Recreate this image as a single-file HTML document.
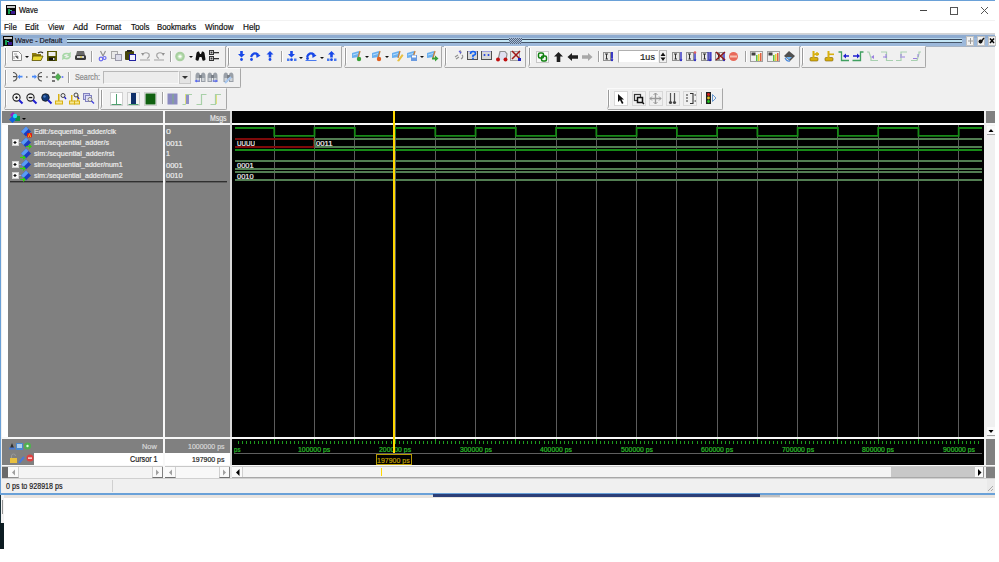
<!DOCTYPE html><html><head><meta charset="utf-8"><style>
html,body{margin:0;padding:0;width:999px;height:562px;overflow:hidden;background:#fff;position:relative}
div{position:absolute;box-sizing:border-box}
.t{font-family:"Liberation Sans",sans-serif;white-space:nowrap;line-height:1;transform-origin:0 0;-webkit-text-stroke:0.2px currentColor}
svg{position:absolute;left:0;top:0}
</style></head><body>
<div style="left:0px;top:0px;width:995px;height:495px;background:#f0f0f0;"></div>
<div style="left:1px;top:1px;width:994px;height:19px;background:#ffffff;"></div>
<div style="left:1px;top:20px;width:994px;height:1px;background:#f2f2f2;"></div>
<div style="left:1px;top:21px;width:994px;height:12px;background:#ffffff;"></div>
<div style="left:1px;top:33px;width:994px;height:1px;background:#d4d4d4;"></div>
<div style="left:0px;top:0px;width:995px;height:1px;background:#6aa1d8;"></div>
<div style="left:0px;top:0px;width:1px;height:495px;background:#6aa1d8;"></div>
<div style="left:6px;top:5px;width:10px;height:10px;background:#0a0a0a;"></div>
<div style="left:7px;top:6px;width:8px;height:2px;background:#c8c8c8;"></div>
<div style="left:8px;top:9px;width:2px;height:5px;background:#18a050;"></div>
<div style="left:10px;top:10px;width:2px;height:1px;background:#30c0a0;"></div>
<div style="left:11px;top:11px;width:4px;height:3px;background:#3a1a90;"></div>
<div class="t" style="left:18.56px;top:6.00px;font-size:8.72px;color:#111;transform:scaleX(0.8635);">Wave</div>
<div style="left:920px;top:10px;width:7px;height:1px;background:#444;"></div>
<div style="left:950px;top:7px;width:8px;height:8px;border:1px solid #555"></div>
<div class="t" style="left:4.46px;top:23.00px;font-size:8.72px;color:#111;transform:scaleX(0.9112);">File</div>
<div class="t" style="left:25.17px;top:23.00px;font-size:8.72px;color:#111;transform:scaleX(0.9047);">Edit</div>
<div class="t" style="left:47.96px;top:23.00px;font-size:8.72px;color:#111;transform:scaleX(0.8553);">View</div>
<div class="t" style="left:73.20px;top:23.00px;font-size:8.72px;color:#111;transform:scaleX(0.9628);">Add</div>
<div class="t" style="left:96.17px;top:23.00px;font-size:8.72px;color:#111;transform:scaleX(0.9084);">Format</div>
<div class="t" style="left:130.74px;top:23.00px;font-size:8.72px;color:#111;transform:scaleX(0.9002);">Tools</div>
<div class="t" style="left:157.27px;top:23.00px;font-size:8.72px;color:#111;transform:scaleX(0.8967);">Bookmarks</div>
<div class="t" style="left:205.46px;top:23.00px;font-size:8.72px;color:#111;transform:scaleX(0.9193);">Window</div>
<div class="t" style="left:242.64px;top:23.00px;font-size:8.72px;color:#111;transform:scaleX(0.9422);">Help</div>
<div style="left:1px;top:34px;width:994px;height:13px;background:#9cb8da;"></div>
<div style="left:1px;top:34px;width:994px;height:1px;background:#c8d0dc;"></div>
<div style="left:1px;top:35px;width:994px;height:3px;background:#8eabd0;"></div>
<div style="left:1px;top:46px;width:994px;height:1px;background:#a8b4c4;"></div>
<div style="left:3px;top:36px;width:10px;height:10px;background:#0a0a0a;"></div>
<div style="left:4px;top:37px;width:8px;height:2px;background:#c8c8c8;"></div>
<div style="left:5px;top:40px;width:2px;height:5px;background:#18a050;"></div>
<div style="left:7px;top:41px;width:2px;height:1px;background:#30c0a0;"></div>
<div style="left:8px;top:42px;width:4px;height:3px;background:#3a1a90;"></div>
<div class="t" style="left:15.06px;top:37.00px;font-size:7.85px;color:#1a1a2a;transform:scaleX(0.9180);">Wave - Default</div>
<div style="left:67px;top:38px;width:442px;height:1px;background:#b4d4ea;"></div>
<div style="left:67px;top:39px;width:442px;height:1px;background:#38465a;"></div>
<div style="left:67px;top:40px;width:442px;height:2px;background:#c4e6f6;"></div>
<div style="left:67px;top:42px;width:442px;height:1px;background:#46566a;"></div>
<div style="left:522px;top:38px;width:440px;height:1px;background:#b4d4ea;"></div>
<div style="left:522px;top:39px;width:440px;height:1px;background:#38465a;"></div>
<div style="left:522px;top:40px;width:440px;height:2px;background:#c4e6f6;"></div>
<div style="left:522px;top:42px;width:440px;height:1px;background:#46566a;"></div>
<div style="left:509px;top:37px;width:13px;height:7px;background:#a6bddb;"></div>
<div style="left:966px;top:36px;width:8px;height:10px;background:#f2f2f2;border:1px solid #c0c0c0"></div>
<div style="left:977px;top:36px;width:8px;height:10px;background:#f2f2f2;border:1px solid #c0c0c0"></div>
<div style="left:988px;top:36px;width:8px;height:10px;background:#f2f2f2;border:1px solid #c0c0c0"></div>
<div style="left:4px;top:46px;width:222px;height:22px;border-right:1px solid #a8a8a8;border-bottom:1px solid #a8a8a8;border-top:1px solid #fafafa;border-left:1px solid #fafafa;border-radius:0 0 2px 0"></div>
<div style="left:227px;top:46px;width:115px;height:22px;border-right:1px solid #a8a8a8;border-bottom:1px solid #a8a8a8;border-top:1px solid #fafafa;border-left:1px solid #fafafa;border-radius:0 0 2px 0"></div>
<div style="left:344px;top:46px;width:98px;height:22px;border-right:1px solid #a8a8a8;border-bottom:1px solid #a8a8a8;border-top:1px solid #fafafa;border-left:1px solid #fafafa;border-radius:0 0 2px 0"></div>
<div style="left:444px;top:46px;width:82px;height:22px;border-right:1px solid #a8a8a8;border-bottom:1px solid #a8a8a8;border-top:1px solid #fafafa;border-left:1px solid #fafafa;border-radius:0 0 2px 0"></div>
<div style="left:528px;top:46px;width:272px;height:22px;border-right:1px solid #a8a8a8;border-bottom:1px solid #a8a8a8;border-top:1px solid #fafafa;border-left:1px solid #fafafa;border-radius:0 0 2px 0"></div>
<div style="left:801px;top:46px;width:125px;height:22px;border-right:1px solid #a8a8a8;border-bottom:1px solid #a8a8a8;border-top:1px solid #fafafa;border-left:1px solid #fafafa;border-radius:0 0 2px 0"></div>
<div style="left:4px;top:68px;width:237px;height:20px;border-right:1px solid #a8a8a8;border-bottom:1px solid #a8a8a8;border-top:1px solid #fafafa;border-left:1px solid #fafafa;border-radius:0 0 2px 0"></div>
<div style="left:4px;top:88px;width:95px;height:22px;border-right:1px solid #a8a8a8;border-bottom:1px solid #a8a8a8;border-top:1px solid #fafafa;border-left:1px solid #fafafa;border-radius:0 0 2px 0"></div>
<div style="left:100px;top:88px;width:127px;height:22px;border-right:1px solid #a8a8a8;border-bottom:1px solid #a8a8a8;border-top:1px solid #fafafa;border-left:1px solid #fafafa;border-radius:0 0 2px 0"></div>
<div style="left:607px;top:88px;width:116px;height:22px;border-right:1px solid #a8a8a8;border-bottom:1px solid #a8a8a8;border-top:1px solid #fafafa;border-left:1px solid #fafafa;border-radius:0 0 2px 0"></div>
<div style="left:91px;top:51px;width:1px;height:11px;background:#a0a0a0;"></div>
<div style="left:92px;top:51px;width:1px;height:11px;background:#ffffff;"></div>
<div style="left:170px;top:51px;width:1px;height:11px;background:#a0a0a0;"></div>
<div style="left:171px;top:51px;width:1px;height:11px;background:#ffffff;"></div>
<div style="left:281px;top:51px;width:1px;height:11px;background:#a0a0a0;"></div>
<div style="left:282px;top:51px;width:1px;height:11px;background:#ffffff;"></div>
<div style="left:598px;top:51px;width:1px;height:11px;background:#a0a0a0;"></div>
<div style="left:599px;top:51px;width:1px;height:11px;background:#ffffff;"></div>
<div style="left:745px;top:51px;width:1px;height:11px;background:#a0a0a0;"></div>
<div style="left:746px;top:51px;width:1px;height:11px;background:#ffffff;"></div>
<div style="left:68px;top:72px;width:1px;height:11px;background:#a0a0a0;"></div>
<div style="left:69px;top:72px;width:1px;height:11px;background:#ffffff;"></div>
<div style="left:162px;top:92px;width:1px;height:12px;background:#a0a0a0;"></div>
<div style="left:163px;top:92px;width:1px;height:12px;background:#ffffff;"></div>
<div style="left:701px;top:92px;width:1px;height:12px;background:#a0a0a0;"></div>
<div style="left:702px;top:92px;width:1px;height:12px;background:#ffffff;"></div>
<div class="t" style="left:74.97px;top:73.00px;font-size:8.72px;color:#8a8a8a;transform:scaleX(0.8314);">Search:</div>
<div style="left:103px;top:71px;width:76px;height:13px;background:#ececec;border-top:1px solid #b8b8b8;border-left:1px solid #b8b8b8;border-bottom:1px solid #f8f8f8;border-right:1px solid #f8f8f8"></div>
<div style="left:179px;top:71px;width:12px;height:13px;background:#e4e4e4;border:1px solid #c8c8c8"></div>
<div style="left:618px;top:50px;width:40px;height:13px;background:#ffffff;border-top:1px solid #b0b0b0;border-left:1px solid #b0b0b0;border-bottom:1px solid #f0f0f0"></div>
<div class="t" style="left:640px;top:54px;font-family:Liberation Mono,monospace;font-size:9px;color:#222;letter-spacing:-0.4px">1us</div>
<div style="left:659px;top:50px;width:8px;height:13px;background:#f0f0f0;border:1px solid #b8b8b8"></div>
<div style="left:1px;top:110px;width:994px;height:1px;background:#f4f4f4;"></div>
<div style="left:2px;top:111px;width:161px;height:12px;background:#808080;"></div>
<div style="left:165px;top:111px;width:65px;height:12px;background:#808080;"></div>
<div style="left:232px;top:111px;width:752px;height:12px;background:#000;"></div>
<div style="left:986px;top:111px;width:9px;height:12px;background:#808080;"></div>
<div style="left:2px;top:123px;width:993px;height:2px;background:#f8f8f8;"></div>
<div style="left:163px;top:111px;width:2px;height:327px;background:#f8f8f8;"></div>
<div style="left:230px;top:111px;width:2px;height:327px;background:#d8d8d8;"></div>
<div style="left:984px;top:111px;width:2px;height:327px;background:#f0f0f0;"></div>
<div style="left:2px;top:125px;width:6px;height:312px;background:#ffffff;"></div>
<div style="left:8px;top:125px;width:155px;height:312px;background:#808080;"></div>
<div style="left:165px;top:125px;width:65px;height:312px;background:#808080;"></div>
<div style="left:232px;top:125px;width:752px;height:312px;background:#000;"></div>
<div class="t" style="left:210.24px;top:114.00px;font-size:8.72px;color:#e8e8e8;transform:scaleX(0.7964);">Msgs</div>
<div style="left:986px;top:125px;width:9px;height:312px;background:#f0f0f0;"></div>
<div style="left:987px;top:126px;width:8px;height:9px;background:#fafafa;border-bottom:1px solid #a0a0a0"></div>
<div style="left:987px;top:427px;width:8px;height:9px;background:#fafafa;border-bottom:1px solid #a0a0a0"></div>
<div class="t" style="left:33.93px;top:128.00px;font-size:7.27px;color:#ececec;transform:scaleX(0.9863);">Edit:/sequential_adder/clk</div>
<div class="t" style="left:34.09px;top:139.00px;font-size:7.27px;color:#ececec;transform:scaleX(0.9768);">sim:/sequential_adder/s</div>
<div class="t" style="left:34.08px;top:150.00px;font-size:7.27px;color:#ececec;transform:scaleX(0.9874);">sim:/sequential_adder/rst</div>
<div class="t" style="left:34.09px;top:161.00px;font-size:7.27px;color:#ececec;transform:scaleX(0.9710);">sim:/sequential_adder/num1</div>
<div class="t" style="left:34.09px;top:172.00px;font-size:7.27px;color:#ececec;transform:scaleX(0.9714);">sim:/sequential_adder/num2</div>
<div class="t" style="left:165.55px;top:128.00px;font-size:7.56px;color:#ececec;transform:scaleX(1.1577);">0</div>
<div class="t" style="left:165.59px;top:140.00px;font-size:7.56px;color:#ececec;transform:scaleX(1.0251);">0011</div>
<div class="t" style="left:166.47px;top:150.00px;font-size:7.56px;color:#ececec;transform:scaleX(0.9429);">1</div>
<div class="t" style="left:165.60px;top:162.00px;font-size:7.56px;color:#ececec;transform:scaleX(0.9892);">0001</div>
<div class="t" style="left:165.60px;top:172.00px;font-size:7.56px;color:#ececec;transform:scaleX(0.9846);">0010</div>
<div style="left:10px;top:181px;width:153px;height:1px;background:#303030;"></div>
<div style="left:10px;top:182px;width:153px;height:1px;background:#606060;"></div>
<div style="left:166px;top:181px;width:61px;height:1px;background:#303030;"></div>
<div style="left:166px;top:182px;width:61px;height:1px;background:#606060;"></div>
<div style="left:12px;top:139px;width:7px;height:7px;background:#f8f8f8;border:1px solid #d0d0d0"></div>
<div style="left:19px;top:142px;width:3px;height:1px;background:#b0b0b0;"></div>
<div style="left:12px;top:161px;width:7px;height:7px;background:#f8f8f8;border:1px solid #d0d0d0"></div>
<div style="left:19px;top:164px;width:3px;height:1px;background:#b0b0b0;"></div>
<div style="left:12px;top:172px;width:7px;height:7px;background:#f8f8f8;border:1px solid #d0d0d0"></div>
<div style="left:19px;top:175px;width:3px;height:1px;background:#b0b0b0;"></div>
<div class="t" style="left:236.53px;top:140.00px;font-size:7.27px;color:#f0f0f0;transform:scaleX(0.8553);">UUUU</div>
<div class="t" style="left:315.69px;top:140.00px;font-size:7.27px;color:#f0f0f0;transform:scaleX(1.0662);">0011</div>
<div class="t" style="left:236.70px;top:162.00px;font-size:7.27px;color:#f0f0f0;transform:scaleX(1.0288);">0001</div>
<div class="t" style="left:236.70px;top:173.00px;font-size:7.27px;color:#f0f0f0;transform:scaleX(1.0240);">0010</div>
<div style="left:2px;top:437px;width:993px;height:2px;background:#f8f8f8;"></div>
<div style="left:2px;top:439px;width:161px;height:14px;background:#808080;"></div>
<div style="left:165px;top:439px;width:65px;height:14px;background:#808080;"></div>
<div style="left:34px;top:453px;width:129px;height:12px;background:#ffffff;"></div>
<div style="left:2px;top:453px;width:32px;height:12px;background:#808080;"></div>
<div style="left:165px;top:453px;width:65px;height:12px;background:#ffffff;"></div>
<div style="left:163px;top:439px;width:2px;height:26px;background:#f8f8f8;"></div>
<div style="left:230px;top:439px;width:2px;height:26px;background:#d8d8d8;"></div>
<div style="left:232px;top:439px;width:752px;height:26px;background:#000;"></div>
<div style="left:984px;top:439px;width:2px;height:26px;background:#f0f0f0;"></div>
<div style="left:986px;top:439px;width:9px;height:26px;background:#808080;"></div>
<div class="t" style="left:142.21px;top:443.00px;font-size:7.56px;color:#d8d8d8;transform:scaleX(0.9829);">Now</div>
<div class="t" style="left:187.68px;top:443.00px;font-size:7.56px;color:#d8d8d8;transform:scaleX(0.9260);">1000000 ps</div>
<div class="t" style="left:129.54px;top:456.00px;font-size:8.14px;color:#222;transform:scaleX(0.8869);">Cursor 1</div>
<div class="t" style="left:191.78px;top:456.00px;font-size:7.56px;color:#222;transform:scaleX(0.9198);">197900 ps</div>
<div class="t" style="left:298.26px;top:446.00px;font-size:7.27px;color:#2cc02c;transform:scaleX(0.9505);">100000 ps</div>
<div class="t" style="left:378.95px;top:446.00px;font-size:7.27px;color:#2cc02c;transform:scaleX(0.9453);">200000 ps</div>
<div class="t" style="left:459.55px;top:446.00px;font-size:7.27px;color:#2cc02c;transform:scaleX(0.9433);">300000 ps</div>
<div class="t" style="left:540.21px;top:446.00px;font-size:7.27px;color:#2cc02c;transform:scaleX(0.9392);">400000 ps</div>
<div class="t" style="left:620.59px;top:446.00px;font-size:7.27px;color:#2cc02c;transform:scaleX(0.9433);">500000 ps</div>
<div class="t" style="left:701.05px;top:446.00px;font-size:7.27px;color:#2cc02c;transform:scaleX(0.9453);">600000 ps</div>
<div class="t" style="left:781.57px;top:446.00px;font-size:7.27px;color:#2cc02c;transform:scaleX(0.9453);">700000 ps</div>
<div class="t" style="left:862.13px;top:446.00px;font-size:7.27px;color:#2cc02c;transform:scaleX(0.9443);">800000 ps</div>
<div class="t" style="left:942.66px;top:446.00px;font-size:7.27px;color:#2cc02c;transform:scaleX(0.9443);">900000 ps</div>
<div class="t" style="left:233.81px;top:447.00px;font-size:6.55px;color:#2cc02c;transform:scaleX(0.9271);">ps</div>
<div style="left:376px;top:454px;width:36px;height:11px;background:#000;border:1px solid #b89a00"></div>
<div class="t" style="left:377.47px;top:457.00px;font-size:7.85px;color:#c0a000;transform:scaleX(0.8941);">197900 ps</div>
<div style="left:2px;top:465px;width:993px;height:1px;background:#f8f8f8;"></div>
<div style="left:2px;top:466px;width:993px;height:1px;background:#c8c8c8;"></div>
<div style="left:2px;top:467px;width:6px;height:11px;background:#6a6a6a;"></div>
<div style="left:8px;top:467px;width:155px;height:11px;background:#f4f4f4;"></div>
<div style="left:8px;top:467px;width:11px;height:11px;background:#fafafa;border-right:1px solid #d0d0d0;border-bottom:1px solid #909090"></div>
<div style="left:152px;top:467px;width:11px;height:11px;background:#fafafa;border-left:1px solid #d0d0d0;border-right:1px solid #808080;border-bottom:1px solid #707070"></div>
<div style="left:163px;top:465px;width:2px;height:13px;background:#f8f8f8;"></div>
<div style="left:165px;top:467px;width:65px;height:11px;background:#f0f0f0;"></div>
<div style="left:176px;top:467px;width:43px;height:11px;background:#f8f8f8;"></div>
<div style="left:165px;top:467px;width:11px;height:11px;background:#fafafa;border-right:1px solid #d0d0d0;border-bottom:1px solid #707070"></div>
<div style="left:219px;top:467px;width:11px;height:11px;background:#fafafa;border-left:1px solid #d0d0d0;border-right:1px solid #808080;border-bottom:1px solid #707070"></div>
<div style="left:230px;top:465px;width:2px;height:13px;background:#e8e8e8;"></div>
<div style="left:232px;top:467px;width:752px;height:11px;background:#f4f4f4;"></div>
<div style="left:232px;top:467px;width:11px;height:11px;background:#fafafa;border-right:1px solid #d0d0d0;border-bottom:1px solid #909090"></div>
<div style="left:891px;top:467px;width:84px;height:11px;background:#c8c8c8;"></div>
<div style="left:975px;top:467px;width:9px;height:11px;background:#fafafa;border-bottom:1px solid #909090;border-right:1px solid #909090"></div>
<div style="left:232px;top:477px;width:752px;height:1px;background:#a8a8a8;"></div>
<div style="left:986px;top:467px;width:9px;height:11px;background:#808080;"></div>
<div style="left:2px;top:478px;width:993px;height:1px;background:#d0d0d0;"></div>
<div style="left:1px;top:479px;width:994px;height:14px;background:#f0f0f0;"></div>
<div style="left:112px;top:480px;width:1px;height:12px;background:#d0d0d0;"></div>
<div class="t" style="left:5.72px;top:482.00px;font-size:8.43px;color:#222;transform:scaleX(0.8435);">0 ps to 928918 ps</div>
<div style="left:987px;top:479px;width:8px;height:14px;background:#eaeaea;"></div>
<div style="left:0px;top:493px;width:995px;height:2px;background:#6aa1d8;"></div>
<div style="left:0px;top:495px;width:995px;height:3px;background:#e8e4e0;"></div>
<div style="left:433px;top:494px;width:327px;height:3px;background:#2c3f78;"></div>
<div style="left:760px;top:495px;width:20px;height:2px;background:#c0c0c0;"></div>
<div style="left:0px;top:495px;width:4px;height:28px;background:#f4f4f4;"></div>
<div style="left:0px;top:495px;width:1px;height:28px;background:#1a3038;"></div>
<div style="left:2px;top:500px;width:1px;height:14px;background:#909090;"></div>
<div style="left:0px;top:523px;width:4px;height:26px;background:#0c1c22;"></div>
<svg width="999" height="562"><path d="M981 7 L988 14 M988 7 L981 14" stroke="#555" stroke-width="1" fill="none"/><rect x="509" y="38" width="1" height="1" fill="#56667c"/><rect x="511" y="38" width="1" height="1" fill="#56667c"/><rect x="513" y="38" width="1" height="1" fill="#56667c"/><rect x="515" y="38" width="1" height="1" fill="#56667c"/><rect x="517" y="38" width="1" height="1" fill="#56667c"/><rect x="519" y="38" width="1" height="1" fill="#56667c"/><rect x="521" y="38" width="1" height="1" fill="#56667c"/><rect x="510" y="39" width="1" height="1" fill="#56667c"/><rect x="512" y="39" width="1" height="1" fill="#56667c"/><rect x="514" y="39" width="1" height="1" fill="#56667c"/><rect x="516" y="39" width="1" height="1" fill="#56667c"/><rect x="518" y="39" width="1" height="1" fill="#56667c"/><rect x="520" y="39" width="1" height="1" fill="#56667c"/><rect x="509" y="40" width="1" height="1" fill="#56667c"/><rect x="511" y="40" width="1" height="1" fill="#56667c"/><rect x="513" y="40" width="1" height="1" fill="#56667c"/><rect x="515" y="40" width="1" height="1" fill="#56667c"/><rect x="517" y="40" width="1" height="1" fill="#56667c"/><rect x="519" y="40" width="1" height="1" fill="#56667c"/><rect x="521" y="40" width="1" height="1" fill="#56667c"/><rect x="510" y="41" width="1" height="1" fill="#56667c"/><rect x="512" y="41" width="1" height="1" fill="#56667c"/><rect x="514" y="41" width="1" height="1" fill="#56667c"/><rect x="516" y="41" width="1" height="1" fill="#56667c"/><rect x="518" y="41" width="1" height="1" fill="#56667c"/><rect x="520" y="41" width="1" height="1" fill="#56667c"/><rect x="509" y="42" width="1" height="1" fill="#56667c"/><rect x="511" y="42" width="1" height="1" fill="#56667c"/><rect x="513" y="42" width="1" height="1" fill="#56667c"/><rect x="515" y="42" width="1" height="1" fill="#56667c"/><rect x="517" y="42" width="1" height="1" fill="#56667c"/><rect x="519" y="42" width="1" height="1" fill="#56667c"/><rect x="521" y="42" width="1" height="1" fill="#56667c"/><rect x="510" y="43" width="1" height="1" fill="#56667c"/><rect x="512" y="43" width="1" height="1" fill="#56667c"/><rect x="514" y="43" width="1" height="1" fill="#56667c"/><rect x="516" y="43" width="1" height="1" fill="#56667c"/><rect x="518" y="43" width="1" height="1" fill="#56667c"/><rect x="520" y="43" width="1" height="1" fill="#56667c"/><path d="M990 38.5 L994 43 M994 38.5 L990 43" stroke="#000" stroke-width="1.5"/><path d="M980 43 L984 38" stroke="#111" stroke-width="1.4"/><circle cx="980.5" cy="41.5" r="2" fill="#111"/><path d="M970.5 38 V44 M968 41 H973" stroke="#999" stroke-width="1"/><path d="M5.5 48 V63 Q5.5 65.5 4.5 66.5" stroke="#9a9a9a" stroke-width="1" fill="none"/><path d="M6.5 48 V63" stroke="#ffffff" stroke-width="1" fill="none"/><path d="M228.5 48 V63 Q228.5 65.5 227.5 66.5" stroke="#9a9a9a" stroke-width="1" fill="none"/><path d="M229.5 48 V63" stroke="#ffffff" stroke-width="1" fill="none"/><path d="M345.5 48 V63 Q345.5 65.5 344.5 66.5" stroke="#9a9a9a" stroke-width="1" fill="none"/><path d="M346.5 48 V63" stroke="#ffffff" stroke-width="1" fill="none"/><path d="M445.5 48 V63 Q445.5 65.5 444.5 66.5" stroke="#9a9a9a" stroke-width="1" fill="none"/><path d="M446.5 48 V63" stroke="#ffffff" stroke-width="1" fill="none"/><path d="M529.5 48 V63 Q529.5 65.5 528.5 66.5" stroke="#9a9a9a" stroke-width="1" fill="none"/><path d="M530.5 48 V63" stroke="#ffffff" stroke-width="1" fill="none"/><path d="M802.5 48 V63 Q802.5 65.5 801.5 66.5" stroke="#9a9a9a" stroke-width="1" fill="none"/><path d="M803.5 48 V63" stroke="#ffffff" stroke-width="1" fill="none"/><path d="M5.5 70 V83 Q5.5 85.5 4.5 86.5" stroke="#9a9a9a" stroke-width="1" fill="none"/><path d="M6.5 70 V83" stroke="#ffffff" stroke-width="1" fill="none"/><path d="M5.5 90 V105 Q5.5 107.5 4.5 108.5" stroke="#9a9a9a" stroke-width="1" fill="none"/><path d="M6.5 90 V105" stroke="#ffffff" stroke-width="1" fill="none"/><path d="M101.5 90 V105 Q101.5 107.5 100.5 108.5" stroke="#9a9a9a" stroke-width="1" fill="none"/><path d="M102.5 90 V105" stroke="#ffffff" stroke-width="1" fill="none"/><path d="M608.5 90 V105 Q608.5 107.5 607.5 108.5" stroke="#9a9a9a" stroke-width="1" fill="none"/><path d="M609.5 90 V105" stroke="#ffffff" stroke-width="1" fill="none"/><path d="M182 76 H188 L185 79 Z" fill="#333"/><path d="M660.5 56 L663 52.5 L665.5 56 Z M660.5 57.5 L663 61 L665.5 57.5 Z" fill="#111"/><g><path d="M10 115 L13 112 L16 115 L13 118Z" fill="#9020c0"/><rect x="15" y="116" width="5" height="5" fill="#109040"/><path d="M9 119.5 L12.5 116 L16 119.5 L12.5 123Z" fill="#1060e0"/><circle cx="15" cy="116" r="2.2" fill="#20e0f0"/><path d="M22 118 H26 L24 120Z" fill="#000"/></g><path d="M988.5 132 L991 129 L993.5 132Z" fill="#000"/><path d="M988.5 430 L991 433 L993.5 430Z" fill="#000"/><path d="M21 131.5 L26 126.5 L31 131.5 L26 136.5Z" fill="#1a3cc0"/><path d="M21 131.5 L26 126.5 L28.5 129.0 L23.5 134.0Z" fill="#5a9cf4"/><rect x="27" y="133.0" width="5" height="4.5" rx="1" fill="#e01818"/><path d="M28.3 137.0 L29.5 133.7 L30.7 137.0" stroke="#ffb000" stroke-width="1" fill="none"/><path d="M13.5 142.5 H16.5 M15 141 V144" stroke="#111" stroke-width="1.2"/><path d="M21 142.5 L26 137.5 L31 142.5 L26 147.5Z" fill="#1a3cc0"/><path d="M21 142.5 L26 137.5 L28.5 140.0 L23.5 145.0Z" fill="#5a9cf4"/><path d="M26 146.0 H29 V144.0 L32 146.5 L29 149.0 V147.0 H26Z" fill="#30d010"/><path d="M21 153.5 L26 148.5 L31 153.5 L26 158.5Z" fill="#1a3cc0"/><path d="M21 153.5 L26 148.5 L28.5 151.0 L23.5 156.0Z" fill="#5a9cf4"/><path d="M20 157.0 H23 V155.0 L26 157.5 L23 160.0 V158.0 H20Z" fill="#30d010"/><path d="M13.5 164.5 H16.5 M15 163 V166" stroke="#111" stroke-width="1.2"/><path d="M21 164.5 L26 159.5 L31 164.5 L26 169.5Z" fill="#1a3cc0"/><path d="M21 164.5 L26 159.5 L28.5 162.0 L23.5 167.0Z" fill="#5a9cf4"/><path d="M20 168.0 H23 V166.0 L26 168.5 L23 171.0 V169.0 H20Z" fill="#30d010"/><path d="M13.5 175.5 H16.5 M15 174 V177" stroke="#111" stroke-width="1.2"/><path d="M21 175.5 L26 170.5 L31 175.5 L26 180.5Z" fill="#1a3cc0"/><path d="M21 175.5 L26 170.5 L28.5 173.0 L23.5 178.0Z" fill="#5a9cf4"/><path d="M20 179.0 H23 V177.0 L26 179.5 L23 182.0 V180.0 H20Z" fill="#30d010"/><rect x="274" y="125" width="1" height="312" fill="#5c5c5c"/><rect x="314" y="125" width="1" height="312" fill="#5c5c5c"/><rect x="354" y="125" width="1" height="312" fill="#5c5c5c"/><rect x="395" y="125" width="1" height="312" fill="#5c5c5c"/><rect x="435" y="125" width="1" height="312" fill="#5c5c5c"/><rect x="475" y="125" width="1" height="312" fill="#5c5c5c"/><rect x="515" y="125" width="1" height="312" fill="#5c5c5c"/><rect x="556" y="125" width="1" height="312" fill="#5c5c5c"/><rect x="596" y="125" width="1" height="312" fill="#5c5c5c"/><rect x="636" y="125" width="1" height="312" fill="#5c5c5c"/><rect x="676" y="125" width="1" height="312" fill="#5c5c5c"/><rect x="717" y="125" width="1" height="312" fill="#5c5c5c"/><rect x="757" y="125" width="1" height="312" fill="#5c5c5c"/><rect x="797" y="125" width="1" height="312" fill="#5c5c5c"/><rect x="837" y="125" width="1" height="312" fill="#5c5c5c"/><rect x="878" y="125" width="1" height="312" fill="#5c5c5c"/><rect x="918" y="125" width="1" height="312" fill="#5c5c5c"/><rect x="958" y="125" width="1" height="312" fill="#5c5c5c"/><path d="M235.0 128 H274.26 V135.8 H314.52 V128 H354.79 V135.8 H395.05 V128 H435.31 V135.8 H475.57 V128 H515.83 V135.8 H556.10 V128 H596.36 V135.8 H636.62 V128 H676.88 V135.8 H717.14 V128 H757.40 V135.8 H797.67 V128 H837.93 V135.8 H878.19 V128 H918.45 V135.8 H958.71 V128 H982.00" stroke="#178a17" stroke-width="1.8" fill="none"/><path d="M235.0 139 H313.52 L314.52 142.5 L313.52 147 H235.0" stroke="#7e0a0a" stroke-width="1.8" fill="none"/><path d="M982 139 H315.52 L314.52 142.5 L315.52 147 H982" stroke="#527e52" stroke-width="1.8" fill="none"/><path d="M235.0 150 H982" stroke="#178a17" stroke-width="1.8" fill="none"/><path d="M235.0 161 H982 M235.0 169 H982" stroke="#527e52" stroke-width="1.8" fill="none"/><path d="M235.0 172 H982 M235.0 180 H982" stroke="#527e52" stroke-width="1.8" fill="none"/><rect x="393" y="111" width="2" height="343" fill="#ffd800"/><rect x="238" y="441" width="1" height="3" fill="#1e9a1e"/><rect x="242" y="441" width="1" height="3" fill="#1e9a1e"/><rect x="246" y="441" width="1" height="3" fill="#1e9a1e"/><rect x="250" y="441" width="1" height="3" fill="#1e9a1e"/><rect x="254" y="441" width="1" height="3" fill="#1e9a1e"/><rect x="258" y="441" width="1" height="3" fill="#1e9a1e"/><rect x="262" y="441" width="1" height="3" fill="#1e9a1e"/><rect x="266" y="441" width="1" height="3" fill="#1e9a1e"/><rect x="270" y="441" width="1" height="3" fill="#1e9a1e"/><rect x="274" y="439" width="1" height="5" fill="#1e9a1e"/><rect x="278" y="441" width="1" height="3" fill="#1e9a1e"/><rect x="282" y="441" width="1" height="3" fill="#1e9a1e"/><rect x="286" y="441" width="1" height="3" fill="#1e9a1e"/><rect x="290" y="441" width="1" height="3" fill="#1e9a1e"/><rect x="294" y="441" width="1" height="3" fill="#1e9a1e"/><rect x="298" y="441" width="1" height="3" fill="#1e9a1e"/><rect x="302" y="441" width="1" height="3" fill="#1e9a1e"/><rect x="306" y="441" width="1" height="3" fill="#1e9a1e"/><rect x="310" y="441" width="1" height="3" fill="#1e9a1e"/><rect x="314" y="439" width="1" height="5" fill="#1e9a1e"/><rect x="318" y="441" width="1" height="3" fill="#1e9a1e"/><rect x="322" y="441" width="1" height="3" fill="#1e9a1e"/><rect x="326" y="441" width="1" height="3" fill="#1e9a1e"/><rect x="330" y="441" width="1" height="3" fill="#1e9a1e"/><rect x="334" y="441" width="1" height="3" fill="#1e9a1e"/><rect x="338" y="441" width="1" height="3" fill="#1e9a1e"/><rect x="342" y="441" width="1" height="3" fill="#1e9a1e"/><rect x="346" y="441" width="1" height="3" fill="#1e9a1e"/><rect x="350" y="441" width="1" height="3" fill="#1e9a1e"/><rect x="354" y="439" width="1" height="5" fill="#1e9a1e"/><rect x="358" y="441" width="1" height="3" fill="#1e9a1e"/><rect x="362" y="441" width="1" height="3" fill="#1e9a1e"/><rect x="366" y="441" width="1" height="3" fill="#1e9a1e"/><rect x="370" y="441" width="1" height="3" fill="#1e9a1e"/><rect x="374" y="441" width="1" height="3" fill="#1e9a1e"/><rect x="378" y="441" width="1" height="3" fill="#1e9a1e"/><rect x="382" y="441" width="1" height="3" fill="#1e9a1e"/><rect x="386" y="441" width="1" height="3" fill="#1e9a1e"/><rect x="391" y="441" width="1" height="3" fill="#1e9a1e"/><rect x="395" y="439" width="1" height="5" fill="#1e9a1e"/><rect x="399" y="441" width="1" height="3" fill="#1e9a1e"/><rect x="403" y="441" width="1" height="3" fill="#1e9a1e"/><rect x="407" y="441" width="1" height="3" fill="#1e9a1e"/><rect x="411" y="441" width="1" height="3" fill="#1e9a1e"/><rect x="415" y="441" width="1" height="3" fill="#1e9a1e"/><rect x="419" y="441" width="1" height="3" fill="#1e9a1e"/><rect x="423" y="441" width="1" height="3" fill="#1e9a1e"/><rect x="427" y="441" width="1" height="3" fill="#1e9a1e"/><rect x="431" y="441" width="1" height="3" fill="#1e9a1e"/><rect x="435" y="439" width="1" height="5" fill="#1e9a1e"/><rect x="439" y="441" width="1" height="3" fill="#1e9a1e"/><rect x="443" y="441" width="1" height="3" fill="#1e9a1e"/><rect x="447" y="441" width="1" height="3" fill="#1e9a1e"/><rect x="451" y="441" width="1" height="3" fill="#1e9a1e"/><rect x="455" y="441" width="1" height="3" fill="#1e9a1e"/><rect x="459" y="441" width="1" height="3" fill="#1e9a1e"/><rect x="463" y="441" width="1" height="3" fill="#1e9a1e"/><rect x="467" y="441" width="1" height="3" fill="#1e9a1e"/><rect x="471" y="441" width="1" height="3" fill="#1e9a1e"/><rect x="475" y="439" width="1" height="5" fill="#1e9a1e"/><rect x="479" y="441" width="1" height="3" fill="#1e9a1e"/><rect x="483" y="441" width="1" height="3" fill="#1e9a1e"/><rect x="487" y="441" width="1" height="3" fill="#1e9a1e"/><rect x="491" y="441" width="1" height="3" fill="#1e9a1e"/><rect x="495" y="441" width="1" height="3" fill="#1e9a1e"/><rect x="499" y="441" width="1" height="3" fill="#1e9a1e"/><rect x="503" y="441" width="1" height="3" fill="#1e9a1e"/><rect x="507" y="441" width="1" height="3" fill="#1e9a1e"/><rect x="511" y="441" width="1" height="3" fill="#1e9a1e"/><rect x="515" y="439" width="1" height="5" fill="#1e9a1e"/><rect x="519" y="441" width="1" height="3" fill="#1e9a1e"/><rect x="523" y="441" width="1" height="3" fill="#1e9a1e"/><rect x="527" y="441" width="1" height="3" fill="#1e9a1e"/><rect x="531" y="441" width="1" height="3" fill="#1e9a1e"/><rect x="535" y="441" width="1" height="3" fill="#1e9a1e"/><rect x="539" y="441" width="1" height="3" fill="#1e9a1e"/><rect x="544" y="441" width="1" height="3" fill="#1e9a1e"/><rect x="548" y="441" width="1" height="3" fill="#1e9a1e"/><rect x="552" y="441" width="1" height="3" fill="#1e9a1e"/><rect x="556" y="439" width="1" height="5" fill="#1e9a1e"/><rect x="560" y="441" width="1" height="3" fill="#1e9a1e"/><rect x="564" y="441" width="1" height="3" fill="#1e9a1e"/><rect x="568" y="441" width="1" height="3" fill="#1e9a1e"/><rect x="572" y="441" width="1" height="3" fill="#1e9a1e"/><rect x="576" y="441" width="1" height="3" fill="#1e9a1e"/><rect x="580" y="441" width="1" height="3" fill="#1e9a1e"/><rect x="584" y="441" width="1" height="3" fill="#1e9a1e"/><rect x="588" y="441" width="1" height="3" fill="#1e9a1e"/><rect x="592" y="441" width="1" height="3" fill="#1e9a1e"/><rect x="596" y="439" width="1" height="5" fill="#1e9a1e"/><rect x="600" y="441" width="1" height="3" fill="#1e9a1e"/><rect x="604" y="441" width="1" height="3" fill="#1e9a1e"/><rect x="608" y="441" width="1" height="3" fill="#1e9a1e"/><rect x="612" y="441" width="1" height="3" fill="#1e9a1e"/><rect x="616" y="441" width="1" height="3" fill="#1e9a1e"/><rect x="620" y="441" width="1" height="3" fill="#1e9a1e"/><rect x="624" y="441" width="1" height="3" fill="#1e9a1e"/><rect x="628" y="441" width="1" height="3" fill="#1e9a1e"/><rect x="632" y="441" width="1" height="3" fill="#1e9a1e"/><rect x="636" y="439" width="1" height="5" fill="#1e9a1e"/><rect x="640" y="441" width="1" height="3" fill="#1e9a1e"/><rect x="644" y="441" width="1" height="3" fill="#1e9a1e"/><rect x="648" y="441" width="1" height="3" fill="#1e9a1e"/><rect x="652" y="441" width="1" height="3" fill="#1e9a1e"/><rect x="656" y="441" width="1" height="3" fill="#1e9a1e"/><rect x="660" y="441" width="1" height="3" fill="#1e9a1e"/><rect x="664" y="441" width="1" height="3" fill="#1e9a1e"/><rect x="668" y="441" width="1" height="3" fill="#1e9a1e"/><rect x="672" y="441" width="1" height="3" fill="#1e9a1e"/><rect x="676" y="439" width="1" height="5" fill="#1e9a1e"/><rect x="680" y="441" width="1" height="3" fill="#1e9a1e"/><rect x="684" y="441" width="1" height="3" fill="#1e9a1e"/><rect x="688" y="441" width="1" height="3" fill="#1e9a1e"/><rect x="692" y="441" width="1" height="3" fill="#1e9a1e"/><rect x="697" y="441" width="1" height="3" fill="#1e9a1e"/><rect x="701" y="441" width="1" height="3" fill="#1e9a1e"/><rect x="705" y="441" width="1" height="3" fill="#1e9a1e"/><rect x="709" y="441" width="1" height="3" fill="#1e9a1e"/><rect x="713" y="441" width="1" height="3" fill="#1e9a1e"/><rect x="717" y="439" width="1" height="5" fill="#1e9a1e"/><rect x="721" y="441" width="1" height="3" fill="#1e9a1e"/><rect x="725" y="441" width="1" height="3" fill="#1e9a1e"/><rect x="729" y="441" width="1" height="3" fill="#1e9a1e"/><rect x="733" y="441" width="1" height="3" fill="#1e9a1e"/><rect x="737" y="441" width="1" height="3" fill="#1e9a1e"/><rect x="741" y="441" width="1" height="3" fill="#1e9a1e"/><rect x="745" y="441" width="1" height="3" fill="#1e9a1e"/><rect x="749" y="441" width="1" height="3" fill="#1e9a1e"/><rect x="753" y="441" width="1" height="3" fill="#1e9a1e"/><rect x="757" y="439" width="1" height="5" fill="#1e9a1e"/><rect x="761" y="441" width="1" height="3" fill="#1e9a1e"/><rect x="765" y="441" width="1" height="3" fill="#1e9a1e"/><rect x="769" y="441" width="1" height="3" fill="#1e9a1e"/><rect x="773" y="441" width="1" height="3" fill="#1e9a1e"/><rect x="777" y="441" width="1" height="3" fill="#1e9a1e"/><rect x="781" y="441" width="1" height="3" fill="#1e9a1e"/><rect x="785" y="441" width="1" height="3" fill="#1e9a1e"/><rect x="789" y="441" width="1" height="3" fill="#1e9a1e"/><rect x="793" y="441" width="1" height="3" fill="#1e9a1e"/><rect x="797" y="439" width="1" height="5" fill="#1e9a1e"/><rect x="801" y="441" width="1" height="3" fill="#1e9a1e"/><rect x="805" y="441" width="1" height="3" fill="#1e9a1e"/><rect x="809" y="441" width="1" height="3" fill="#1e9a1e"/><rect x="813" y="441" width="1" height="3" fill="#1e9a1e"/><rect x="817" y="441" width="1" height="3" fill="#1e9a1e"/><rect x="821" y="441" width="1" height="3" fill="#1e9a1e"/><rect x="825" y="441" width="1" height="3" fill="#1e9a1e"/><rect x="829" y="441" width="1" height="3" fill="#1e9a1e"/><rect x="833" y="441" width="1" height="3" fill="#1e9a1e"/><rect x="837" y="439" width="1" height="5" fill="#1e9a1e"/><rect x="841" y="441" width="1" height="3" fill="#1e9a1e"/><rect x="845" y="441" width="1" height="3" fill="#1e9a1e"/><rect x="850" y="441" width="1" height="3" fill="#1e9a1e"/><rect x="854" y="441" width="1" height="3" fill="#1e9a1e"/><rect x="858" y="441" width="1" height="3" fill="#1e9a1e"/><rect x="862" y="441" width="1" height="3" fill="#1e9a1e"/><rect x="866" y="441" width="1" height="3" fill="#1e9a1e"/><rect x="870" y="441" width="1" height="3" fill="#1e9a1e"/><rect x="874" y="441" width="1" height="3" fill="#1e9a1e"/><rect x="878" y="439" width="1" height="5" fill="#1e9a1e"/><rect x="882" y="441" width="1" height="3" fill="#1e9a1e"/><rect x="886" y="441" width="1" height="3" fill="#1e9a1e"/><rect x="890" y="441" width="1" height="3" fill="#1e9a1e"/><rect x="894" y="441" width="1" height="3" fill="#1e9a1e"/><rect x="898" y="441" width="1" height="3" fill="#1e9a1e"/><rect x="902" y="441" width="1" height="3" fill="#1e9a1e"/><rect x="906" y="441" width="1" height="3" fill="#1e9a1e"/><rect x="910" y="441" width="1" height="3" fill="#1e9a1e"/><rect x="914" y="441" width="1" height="3" fill="#1e9a1e"/><rect x="918" y="439" width="1" height="5" fill="#1e9a1e"/><rect x="922" y="441" width="1" height="3" fill="#1e9a1e"/><rect x="926" y="441" width="1" height="3" fill="#1e9a1e"/><rect x="930" y="441" width="1" height="3" fill="#1e9a1e"/><rect x="934" y="441" width="1" height="3" fill="#1e9a1e"/><rect x="938" y="441" width="1" height="3" fill="#1e9a1e"/><rect x="942" y="441" width="1" height="3" fill="#1e9a1e"/><rect x="946" y="441" width="1" height="3" fill="#1e9a1e"/><rect x="950" y="441" width="1" height="3" fill="#1e9a1e"/><rect x="954" y="441" width="1" height="3" fill="#1e9a1e"/><rect x="958" y="439" width="1" height="5" fill="#1e9a1e"/><rect x="962" y="441" width="1" height="3" fill="#1e9a1e"/><rect x="966" y="441" width="1" height="3" fill="#1e9a1e"/><rect x="970" y="441" width="1" height="3" fill="#1e9a1e"/><rect x="974" y="441" width="1" height="3" fill="#1e9a1e"/><rect x="978" y="441" width="1" height="3" fill="#1e9a1e"/><rect x="234" y="453" width="748" height="1" fill="#5e5e5e"/><rect x="393" y="454" width="2" height="0" fill="#ffd800"/><g><path d="M10 448 L12 443 L14 448Z" fill="#303030"/><rect x="9" y="447.5" width="6" height="2" fill="#4a7ad0"/><rect x="16" y="443" width="7" height="7" fill="#4a8ad0"/><rect x="17" y="444" width="5" height="4" fill="#b0d0f0"/><circle cx="27.5" cy="446" r="3.6" fill="#50b050"/><circle cx="27.5" cy="446" r="1.2" fill="#e0ffe0"/></g><g><rect x="10" y="458" width="7" height="5" fill="#e8c040"/><path d="M11.5 458 V456 A2 2 0 0 1 15.5 456" stroke="#999" fill="none"/><path d="M19 463 L24 457" stroke="#4a7ad8" stroke-width="2"/><circle cx="30" cy="458" r="3.5" fill="#e04040"/><rect x="28" y="457.5" width="4" height="1.2" fill="#fff"/></g><path d="M15 469.5 L12 472.5 L15 475.5Z" fill="#a0a0a0"/><path d="M156 469.5 L159 472.5 L156 475.5Z" fill="#a0a0a0"/><path d="M172 469.5 L169 472.5 L172 475.5Z" fill="#a0a0a0"/><path d="M223 469.5 L226 472.5 L223 475.5Z" fill="#a0a0a0"/><path d="M239.5 469 L236 472.5 L239.5 476Z" fill="#000"/><path d="M978 469 L981.5 472.5 L978 476Z" fill="#000"/><rect x="381" y="468" width="1" height="8" fill="#ffd800"/><path d="M988 491 L993 486 M991 491 L993 489" stroke="#aaa" stroke-width="1"/><path d="M12.5 51.5 H18.5 L21.5 54.5 V60.5 H12.5Z" fill="#fafafa" stroke="#8c8c8c"/><path d="M14 54 H17 M14 56 V59 M15 56 H18 V59" stroke="#a0a0a0" stroke-width="1"/><path d="M25 56 H29 L27 58Z" fill="#111"/><path d="M32 53 H36 L37 54 H41 V60 H32Z" fill="#8a7a10"/><path d="M33 56 H43 L41 60.5 H32Z" fill="#e8d830" stroke="#5a5000" stroke-width="0.8"/><path d="M38 53 Q41 51 43 53" stroke="#222" fill="none" stroke-width="1.2"/><rect x="47" y="51" width="10" height="10" fill="#5a5a00"/><rect x="48.5" y="52" width="7" height="4" fill="#f0f0f0"/><rect x="49" y="57.5" width="6" height="3" fill="#111"/><rect x="53" y="58" width="1.5" height="2" fill="#ddd"/><path d="M62 56 Q63 51.5 69 53 L71 52 L70.5 56.5 L66.5 55.5 L68.5 54.5 Q64.5 53.5 63.5 56.5Z" fill="#a8d8a8"/><path d="M71 56 Q70 60.5 64 59 L62 60 L62.5 55.5 L66.5 56.5 L64.5 57.5 Q68.5 58.5 69.5 55.5Z" fill="#a8d8a8"/><path d="M77 51 H84 L85 55 H76Z" fill="#6a6a6a"/><rect x="75" y="55" width="11" height="5" rx="1.5" fill="#3a3a3a"/><rect x="77" y="56" width="7" height="2" fill="#d0d0d0"/><rect x="80" y="56.5" width="2" height="1" fill="#d8c000"/><path d="M100.5 51 L103 56 M105.5 51 L103 56" stroke="#909090" stroke-width="1.2"/><circle cx="101" cy="59" r="1.8" fill="none" stroke="#6a6af0" stroke-width="1.2"/><circle cx="104.5" cy="58" r="1.5" fill="none" stroke="#6a6af0" stroke-width="1.2"/><rect x="111.5" y="51.5" width="6" height="7" fill="#e8e8e8" stroke="#a8a8a8"/><rect x="115.5" y="54.5" width="6" height="6" fill="#dcdce8" stroke="#9898a8"/><rect x="125" y="51" width="9" height="9" rx="1" fill="#46460a"/><rect x="127" y="50" width="5" height="2" fill="#222"/><rect x="129.5" y="54.5" width="6" height="6" fill="#f0f0ff" stroke="#2020a0"/><path d="M143 54 Q146 51.5 149 54 Q150 57 147 58.5" stroke="#a0a0a0" fill="none" stroke-width="1.2"/><path d="M141 53 L144 53 L143 56Z" fill="#909090"/><rect x="140" y="59.5" width="10" height="1" fill="#a0a0a0"/><path d="M163 54 Q160 51.5 157 54 Q156 57 159 58.5" stroke="#a0a0a0" fill="none" stroke-width="1.2"/><path d="M165 53 L162 53 L163 56Z" fill="#909090"/><rect x="154" y="59.5" width="10" height="1" fill="#a0a0a0"/><circle cx="180" cy="56.5" r="4.8" fill="#a8d0a0"/><circle cx="180" cy="56.5" r="2.5" fill="#c8e8c0"/><path d="M178.5 56.5 H181.5 M180 55 V58" stroke="#fff" stroke-width="1"/><path d="M189 56 H193 L191 58Z" fill="#111"/><path d="M195.5 59.5 L196.5 53 Q197 51 199 51.5 L200 54 L201 54 L202 51.5 Q204 51 204.5 53 L205.5 59.5 Q205 61 202.5 60.5 L201.5 57 H199.5 L198.5 60.5 Q196 61 195.5 59.5Z" fill="#111"/><rect x="209.5" y="50.5" width="4" height="4" fill="none" stroke="#333"/><rect x="209.5" y="56.5" width="4" height="4" fill="none" stroke="#333"/><rect x="214" y="52" width="5" height="1.3" fill="#333"/><rect x="214" y="58" width="5" height="1.3" fill="#333"/><rect x="210.5" y="51.5" width="2" height="2" fill="#333"/><rect x="210.5" y="57.5" width="2" height="2" fill="#333"/><path d="M240.2 51 H242.8 V54 H245.0 L241.5 57.5 L238.0 54 H240.2Z" fill="#1848e8"/><circle cx="241.5" cy="59.5" r="1.4" fill="#1848e8"/><path d="M251 57 Q253 51.5 258 54.5" stroke="#1848e8" stroke-width="2.2" fill="none"/><path d="M256 52.5 L260.5 55.5 L256.5 58Z" fill="#1848e8"/><circle cx="251.5" cy="59.5" r="1.4" fill="#1848e8"/><path d="M270 51 L273.5 54.5 H271.3 V57.5 H268.7 V54.5 H266.5Z" fill="#1848e8"/><circle cx="270" cy="59.5" r="1.4" fill="#1848e8"/><path d="M290.2 51 H292.8 V54 H295.0 L291.5 57.5 L288.0 54 H290.2Z" fill="#1848e8"/><rect x="287" y="58.5" width="2.5" height="2.5" fill="#4a7af0"/><circle cx="291.5" cy="59.7" r="1.4" fill="#1848e8"/><rect x="294" y="58.5" width="2.5" height="2.5" fill="#4a7af0"/><path d="M299 57 H303 L301 59Z" fill="#111"/><path d="M307 57 Q309 51.5 314 54.5" stroke="#1848e8" stroke-width="2.2" fill="none"/><path d="M312 52.5 L316.5 55.5 L312.5 58Z" fill="#1848e8"/><circle cx="307.5" cy="58.5" r="1.4" fill="#1848e8"/><rect x="305.5" y="60" width="11" height="1" fill="#4a7af0"/><path d="M320 57 H324 L322 59Z" fill="#111"/><path d="M331.5 51 L335.0 54.5 H332.8 V57.5 H330.2 V54.5 H328.0Z" fill="#1848e8"/><rect x="327" y="58.5" width="2.5" height="2.5" fill="#4a7af0"/><circle cx="331.5" cy="59.7" r="1.4" fill="#1848e8"/><rect x="334" y="58.5" width="2.5" height="2.5" fill="#4a7af0"/><path d="M352 53 L359 51 L359 57 L352 58Z" fill="#6ab0f0"/><path d="M353 55 L358 53.5" stroke="#c8e8ff" stroke-width="0.8"/><path d="M360 51 L358 58" stroke="#c08040" stroke-width="1.3"/><circle cx="359" cy="59" r="2.2" fill="#38a038"/><path d="M365 56 H369 L367 58Z" fill="#111"/><path d="M372 53 L379 51 L379 57 L372 58Z" fill="#6ab0f0"/><path d="M373 55 L378 53.5" stroke="#c8e8ff" stroke-width="0.8"/><path d="M380 51 L378 58" stroke="#c08040" stroke-width="1.3"/><circle cx="379" cy="59" r="2.2" fill="#e06020"/><path d="M385 56 H389 L387 58Z" fill="#111"/><path d="M392 53 L399 51 L399 57 L392 58Z" fill="#6ab0f0"/><path d="M393 55 L398 53.5" stroke="#c8e8ff" stroke-width="0.8"/><path d="M400 51 L398 58" stroke="#c08040" stroke-width="1.3"/><path d="M397 61 L402 54 L403.5 55.5 L399 61.5Z" fill="#e8c040"/><path d="M407 53 L414 51 L414 57 L407 58Z" fill="#6ab0f0"/><path d="M408 55 L413 53.5" stroke="#c8e8ff" stroke-width="0.8"/><path d="M415 51 L413 58" stroke="#c08040" stroke-width="1.3"/><rect x="411" y="55" width="6" height="6" fill="#6a9ae0"/><rect x="412" y="55.5" width="4" height="2" fill="#fff"/><path d="M420 56 H424 L422 58Z" fill="#111"/><path d="M427 53 L434 51 L434 57 L427 58Z" fill="#6ab0f0"/><path d="M428 55 L433 53.5" stroke="#c8e8ff" stroke-width="0.8"/><path d="M435 51 L433 58" stroke="#c08040" stroke-width="1.3"/><path d="M432 57.5 H435 V55.5 L438.5 58.5 L435 61.5 V59.5 H432Z" fill="#38a038"/><path d="M455 57 L458 55 M456 59 L459 57 M460 54 Q462 52 460 50.5 M461 59 Q464 57 462 55" stroke="#909090" stroke-width="1.1" fill="none"/><path d="M459 51 L461 53" stroke="#6060e0" stroke-width="1.2"/><rect x="467.5" y="51.5" width="10" height="8" fill="#d8d8d8" stroke="#505050"/><rect x="468" y="51" width="9" height="1" fill="#a0a0e0"/><path d="M470.5 54 Q470.5 51.5 473 51.5 Q475.5 51.5 475.5 53.5 Q475.5 55 473 55.5 V57" stroke="#1060f0" stroke-width="1.6" fill="none"/><circle cx="473" cy="58.5" r="0.9" fill="#1060f0"/><rect x="481.5" y="51.5" width="10" height="8" fill="#d8d8d8" stroke="#505050"/><rect x="482" y="51" width="9" height="1" fill="#a0a0e0"/><circle cx="484.5" cy="55" r="1" fill="#2040e0"/><circle cx="488.5" cy="55" r="1" fill="#2040e0"/><path d="M498 60 L500 51.5 H505 L507 54 L506 60" stroke="#909090" stroke-width="1.2" fill="#e0e0f0"/><circle cx="498" cy="59.5" r="2" fill="#c01010"/><circle cx="505.5" cy="59.5" r="2" fill="#c01010"/><rect x="510.5" y="51.5" width="9" height="9" fill="#e4e4e4" stroke="#a0a0a0"/><path d="M512 51 L520 59 M520 51 L512 59" stroke="#a01818" stroke-width="1.5"/><rect x="518" y="58" width="3" height="3" fill="#2020c0"/><rect x="536.5" y="51.5" width="12" height="11" fill="#f8f8f8" stroke="#c8c8c8"/><rect x="538.5" y="53" width="5" height="5" rx="1.5" fill="none" stroke="#108010" stroke-width="1.5"/><rect x="541.5" y="56" width="5" height="5" rx="1.5" fill="none" stroke="#108010" stroke-width="1.5"/><path d="M558.5 52 L563 56.5 H560.3 V62 H556.7 V56.5 H554Z" fill="#202020"/><path d="M567.5 57 L572 53 V55.3 H578 V58.7 H572 V61Z" fill="#202020"/><path d="M592.5 57 L588 53 V55.3 H582 V58.7 H588 V61Z" fill="#a8a8a8"/><rect x="603.5" y="52.5" width="7" height="8" fill="#e8e8e8" stroke="#909090"/><path d="M605 54 H608 M606.5 54 V59 M605.5 59 H608" stroke="#303030" stroke-width="1"/><path d="M612 52 V61" stroke="#2020c0" stroke-width="1.3"/><path d="M610.5 59.5 H613.5 L612 61.5Z" fill="#2020c0"/><path d="M612 52 V58" stroke="#2020c0" stroke-width="1.3"/><rect x="672.5" y="52.5" width="7" height="8" fill="#e8e8e8" stroke="#909090"/><path d="M674 54 H677 M675.5 54 V59 M674.5 59 H677" stroke="#303030" stroke-width="1"/><path d="M681 52 V61" stroke="#2020c0" stroke-width="1.3"/><path d="M679.5 59.5 H682.5 L681 61.5Z" fill="#2020c0"/><rect x="686.5" y="52.5" width="7" height="8" fill="#e8e8e8" stroke="#909090"/><path d="M688 54 H691 M689.5 54 V59 M688.5 59 H691" stroke="#303030" stroke-width="1"/><path d="M695 52 V61" stroke="#2020c0" stroke-width="1.3"/><path d="M693.5 59.5 H696.5 L695 61.5Z" fill="#2020c0"/><circle cx="695" cy="52.5" r="1.3" fill="#e06060"/><rect x="701.5" y="52.5" width="7" height="8" fill="#e8e8e8" stroke="#909090"/><path d="M703 54 H706 M704.5 54 V59 M703.5 59 H706" stroke="#303030" stroke-width="1"/><path d="M710 52 V61" stroke="#2020c0" stroke-width="1.3"/><path d="M708.5 59.5 H711.5 L710 61.5Z" fill="#2020c0"/><path d="M708 52 V61 M711 52 V61" stroke="#2020c0" stroke-width="1"/><rect x="715.5" y="52.5" width="7" height="8" fill="#e8e8e8" stroke="#909090"/><path d="M717 54 H720 M718.5 54 V59 M717.5 59 H720" stroke="#303030" stroke-width="1"/><path d="M724 52 V61" stroke="#2020c0" stroke-width="1.3"/><path d="M722.5 59.5 H725.5 L724 61.5Z" fill="#2020c0"/><path d="M716 52 L725 60 M725 52 L716 60" stroke="#901818" stroke-width="1.5"/><circle cx="733.5" cy="56.5" r="4.5" fill="#e86a5a"/><rect x="730" y="55.5" width="7" height="2" fill="#f8c0b0"/><rect x="750.5" y="51.5" width="12" height="10" fill="#f0f0f0" stroke="#a0a0a0"/><rect x="751.5" y="52.5" width="4" height="3" fill="#404040"/><rect x="756" y="55" width="1.5" height="6" fill="#60c040"/><rect x="758" y="54" width="1.5" height="7" fill="#e8d030"/><rect x="760" y="53" width="1.5" height="8" fill="#e06040"/><rect x="767.5" y="51.5" width="12" height="10" fill="#f0f0f0" stroke="#a0a0a0"/><rect x="768.5" y="52.5" width="4" height="3" fill="#404040"/><rect x="773" y="55" width="1.5" height="6" fill="#60c040"/><rect x="775" y="54" width="1.5" height="7" fill="#e8d030"/><rect x="777" y="53" width="1.5" height="8" fill="#e06040"/><path d="M784 56 L789 51 L795 56 L790 61Z" fill="#505050"/><path d="M786 57 L789 60 L792 57" fill="#6ab0f0"/><path d="M785 58 Q787 62 790 61" stroke="#4a8ae0" stroke-width="1.2" fill="none"/><rect x="810" y="57.5" width="8" height="3.5" rx="1" fill="#d8b010" stroke="#806000" stroke-width="0.6"/><rect x="812.5" y="51" width="2" height="7" fill="#d8b010"/><rect x="814" y="53.5" width="5" height="1.6" fill="#d8b010"/><path d="M817 52 V56 M815 54 H819" stroke="#d8b010" stroke-width="1.4"/><rect x="825" y="57.5" width="8" height="3.5" rx="1" fill="#d8b010" stroke="#806000" stroke-width="0.6"/><rect x="827.5" y="51" width="2" height="7" fill="#d8b010"/><rect x="829" y="53.5" width="5" height="1.6" fill="#d8b010"/><path d="M838.5 52 H841.5 V60.5 H849" stroke="#40a060" stroke-width="1.3" fill="none"/><path d="M843 56 L846 53.5 V55.2 H849 V56.8 H846 V58.5Z" fill="#2020d0"/><path d="M852.5 60.5 H860.5 V52 H863.5" stroke="#40a060" stroke-width="1.3" fill="none"/><path d="M860 56 L857 53.5 V55.2 H853 V56.8 H857 V58.5Z" fill="#2020d0"/><path d="M867 52 H869 L871 58 V60.5 H878" stroke="#a8d0b0" stroke-width="1.2" fill="none"/><path d="M871 57 L874 55 V59Z" fill="#9a80e0"/><path d="M881 52 H886.5 V60.5 H893" stroke="#a8d0b0" stroke-width="1.2" fill="none"/><path d="M883 57 L887 57 M886 54 V58" stroke="#9a80e0" stroke-width="1"/><path d="M896 60.5 H901 V52 H907" stroke="#a8d0b0" stroke-width="1.2" fill="none"/><path d="M905 57 L902 57 M901 54 V58" stroke="#9a80e0" stroke-width="1"/><path d="M911 60.5 H917 L919 54 V52 H921" stroke="#a8d0b0" stroke-width="1.2" fill="none"/><path d="M913 58.5 H917 M918 54 V57" stroke="#9a80e0" stroke-width="1"/><path d="M13 72.5 Q16.5 72.5 17 76.5 M13 81 Q16.5 81 17 77 M13 76.7 H17" stroke="#555" stroke-width="1.2" fill="none"/><path d="M17.5 76.7 L20 74.5 V75.8 H22.5 V77.6 H20 V79Z" fill="#4a8af8"/><circle cx="26.8" cy="77" r="0.8" fill="#444"/><circle cx="47" cy="77" r="0.8" fill="#444"/><path d="M42 72.5 Q38.5 72.5 38 76.5 M42 81 Q38.5 81 38 77 M42 76.7 H38" stroke="#555" stroke-width="1.2" fill="none"/><path d="M37 76.7 L34.5 74.5 V75.8 H32 V77.6 H34.5 V79Z" fill="#4a8af8"/><rect x="52" y="72" width="3" height="2" fill="#777"/><rect x="52" y="76" width="3" height="2" fill="#777"/><rect x="52" y="80" width="3" height="2" fill="#777"/><path d="M58 73.5 L61 77 L58 80.5 L55 77Z" fill="#50b050" stroke="#408040" stroke-width="0.6"/><circle cx="62.5" cy="77" r="1" fill="#6a7af8"/><path d="M195.5 82 V76 Q195.5 72.5 198 72.5 Q200 72.5 200 75 V82Z" fill="#9aa0a8"/><path d="M201 82 V75 Q201 72.5 203 72.5 Q205.5 72.5 205.5 76 V82Z" fill="#9aa0a8"/><rect x="199" y="75" width="3" height="3" fill="#7a8088"/><rect x="196.5" y="78" width="2.5" height="3" fill="#d0d4d8"/><rect x="202" y="78" width="2.5" height="3" fill="#d0d4d8"/><path d="M194.5 81 L197 79.5 V80.5 H200 V81.5 H197 V82.5Z" fill="#5a6af8"/><path d="M207.5 82 V76 Q207.5 72.5 210 72.5 Q212 72.5 212 75 V82Z" fill="#9aa0a8"/><path d="M213 82 V75 Q213 72.5 215 72.5 Q217.5 72.5 217.5 76 V82Z" fill="#9aa0a8"/><rect x="211" y="75" width="3" height="3" fill="#7a8088"/><rect x="208.5" y="78" width="2.5" height="3" fill="#d0d4d8"/><rect x="214" y="78" width="2.5" height="3" fill="#d0d4d8"/><path d="M218 81 L215.5 79.5 V80.5 H212.5 V81.5 H215.5 V82.5Z" fill="#5a6af8"/><path d="M223.5 82 V76 Q223.5 72.5 226 72.5 Q228 72.5 228 75 V82Z" fill="#9aa0a8"/><path d="M229 82 V75 Q229 72.5 231 72.5 Q233.5 72.5 233.5 76 V82Z" fill="#9aa0a8"/><rect x="227" y="75" width="3" height="3" fill="#7a8088"/><rect x="224.5" y="78" width="2.5" height="3" fill="#d0d4d8"/><rect x="230" y="78" width="2.5" height="3" fill="#d0d4d8"/><path d="M225 83 L231 77" stroke="#a8c8f0" stroke-width="2"/><circle cx="16.5" cy="97.5" r="3.6" fill="#f4f4f4" stroke="#222" stroke-width="1.1"/><path d="M16.5 96.0 L18.0 97.5 L16.5 99.0 L15.0 97.5Z" fill="#111"/><path d="M19.0 100.0 L22.5 103.5" stroke="#2020d0" stroke-width="2"/><circle cx="30.5" cy="97.5" r="3.6" fill="#f4f4f4" stroke="#222" stroke-width="1.1"/><rect x="28.7" y="96.9" width="3.6" height="1.3" fill="#111"/><path d="M33.0 100.0 L36.5 103.5" stroke="#2020d0" stroke-width="2"/><circle cx="45.5" cy="97.5" r="3.8" fill="#103a7a" stroke="#111" stroke-width="0.8"/><circle cx="44.5" cy="96.5" r="1.2" fill="#4a7ac0"/><path d="M48.0 100.0 L51.5 103.5" stroke="#2020d0" stroke-width="2"/><rect x="55.5" y="101" width="7" height="3" fill="#f8e890" stroke="#d8b010" stroke-width="1"/><rect x="58" y="94" width="1.5" height="7" fill="#d8b010"/><circle cx="63" cy="95.5" r="2" fill="#eee" stroke="#333" stroke-width="0.9"/><path d="M64.5 97 L66 99" stroke="#2020d0" stroke-width="1.3"/><rect x="69.5" y="101" width="5" height="3" fill="#f8e890" stroke="#d8b010"/><rect x="74.5" y="101" width="5" height="3" fill="#f8e890" stroke="#d8b010"/><rect x="71" y="95" width="1.5" height="6" fill="#d8b010"/><rect x="77" y="95" width="1.5" height="6" fill="#d8b010"/><circle cx="76" cy="95" r="2" fill="#eee" stroke="#333" stroke-width="0.9"/><path d="M77.5 96.5 L79 99" stroke="#2020d0" stroke-width="1.3"/><rect x="83.5" y="93.5" width="6" height="6" fill="#d0d0f0" stroke="#8080c0"/><rect x="85.5" y="95.5" width="6" height="6" fill="#e0e0f8" stroke="#8080c0"/><circle cx="90" cy="99.5" r="2" fill="#eee" stroke="#777" stroke-width="0.9"/><path d="M91.5 101 L94 103.5" stroke="#4040e0" stroke-width="1.2"/><rect x="110.5" y="92.5" width="12" height="13" fill="#fff" stroke="#d0d0d0"/><path d="M116.5 94 V104.5 M111.5 104.5 H121.5" stroke="#50a070" stroke-width="1"/><rect x="127.5" y="92.5" width="12" height="13" fill="#f4f4f4" stroke="#d0d0d0"/><rect x="131" y="93" width="5" height="11" fill="#10306a"/><path d="M128.5 104.5 H138.5" stroke="#50a070" stroke-width="1"/><rect x="144.5" y="92.5" width="12" height="13" fill="#f4f4f4" stroke="#d0d0d0"/><rect x="145.5" y="93.5" width="10" height="11" fill="#106010"/><rect x="167.5" y="93.5" width="10" height="11" fill="#8a8ac0"/><path d="M173 94 V104" stroke="#80b080" stroke-width="1"/><rect x="186" y="94" width="3" height="10" fill="#9090c8"/><path d="M182.5 104.5 H185.5 V94.5 H192" stroke="#a8d0a8" stroke-width="1" fill="none"/><path d="M185.5 94 V104" stroke="#e0e080" stroke-width="1"/><path d="M196.5 104.5 H201.5 V94.5 H206.5" stroke="#a8d0a8" stroke-width="1.2" fill="none"/><path d="M210.5 104.5 H215.5 V94.5 H221" stroke="#a8d0a8" stroke-width="1.2" fill="none"/><path d="M216.5 95 V104" stroke="#e0e080" stroke-width="1"/><rect x="614.5" y="91.5" width="13" height="14" fill="#fff" stroke="#d8d8d8"/><path d="M618 94 L618 102 L620 100 L622 104 L623.5 103 L621.5 99.5 L624 99.5Z" fill="#111"/><rect x="632.5" y="91.5" width="13" height="14" fill="#f0f0f0" stroke="#d8d8d8"/><rect x="649.5" y="91.5" width="13" height="14" fill="#f0f0f0" stroke="#d8d8d8"/><rect x="666.5" y="91.5" width="13" height="14" fill="#f0f0f0" stroke="#d8d8d8"/><rect x="683.5" y="91.5" width="13" height="14" fill="#f0f0f0" stroke="#d8d8d8"/><rect x="634.5" y="94.5" width="6" height="6" fill="none" stroke="#333" stroke-width="1.2"/><rect x="637.5" y="97.5" width="5" height="5" fill="#f0f0f0" stroke="#111" stroke-width="1.5"/><path d="M642 102 L644 104" stroke="#111" stroke-width="1.2"/><path d="M655.5 93 V104 M650 98.5 H661" stroke="#999" stroke-width="1.3"/><path d="M653.5 95 L655.5 93 L657.5 95 M653.5 102 L655.5 104 L657.5 102 M652 96.5 L650 98.5 L652 100.5 M659 96.5 L661 98.5 L659 100.5" stroke="#999" fill="none"/><path d="M670.5 93 V102 M674.5 93 V102" stroke="#555" stroke-width="1.2"/><circle cx="670.5" cy="102.5" r="1.6" fill="#444"/><circle cx="674.5" cy="102.5" r="1.6" fill="#444"/><path d="M686 95 H688 M686 98 H688 M686 101 H688 M690 93.5 H693 V103.5 H690 M694.5 95 H696 M694.5 101 H696" stroke="#333" stroke-width="1.1" fill="none"/><rect x="706" y="92" width="5" height="12" fill="#202020"/><circle cx="708.5" cy="94.5" r="1.4" fill="#e02020"/><circle cx="708.5" cy="98" r="1.4" fill="#e0c020"/><circle cx="708.5" cy="101.5" r="1.4" fill="#20c020"/><path d="M712.5 94.5 L716 98 L712.5 101.5Z" fill="none" stroke="#6a9ad0" stroke-width="1"/></svg>
</body></html>
